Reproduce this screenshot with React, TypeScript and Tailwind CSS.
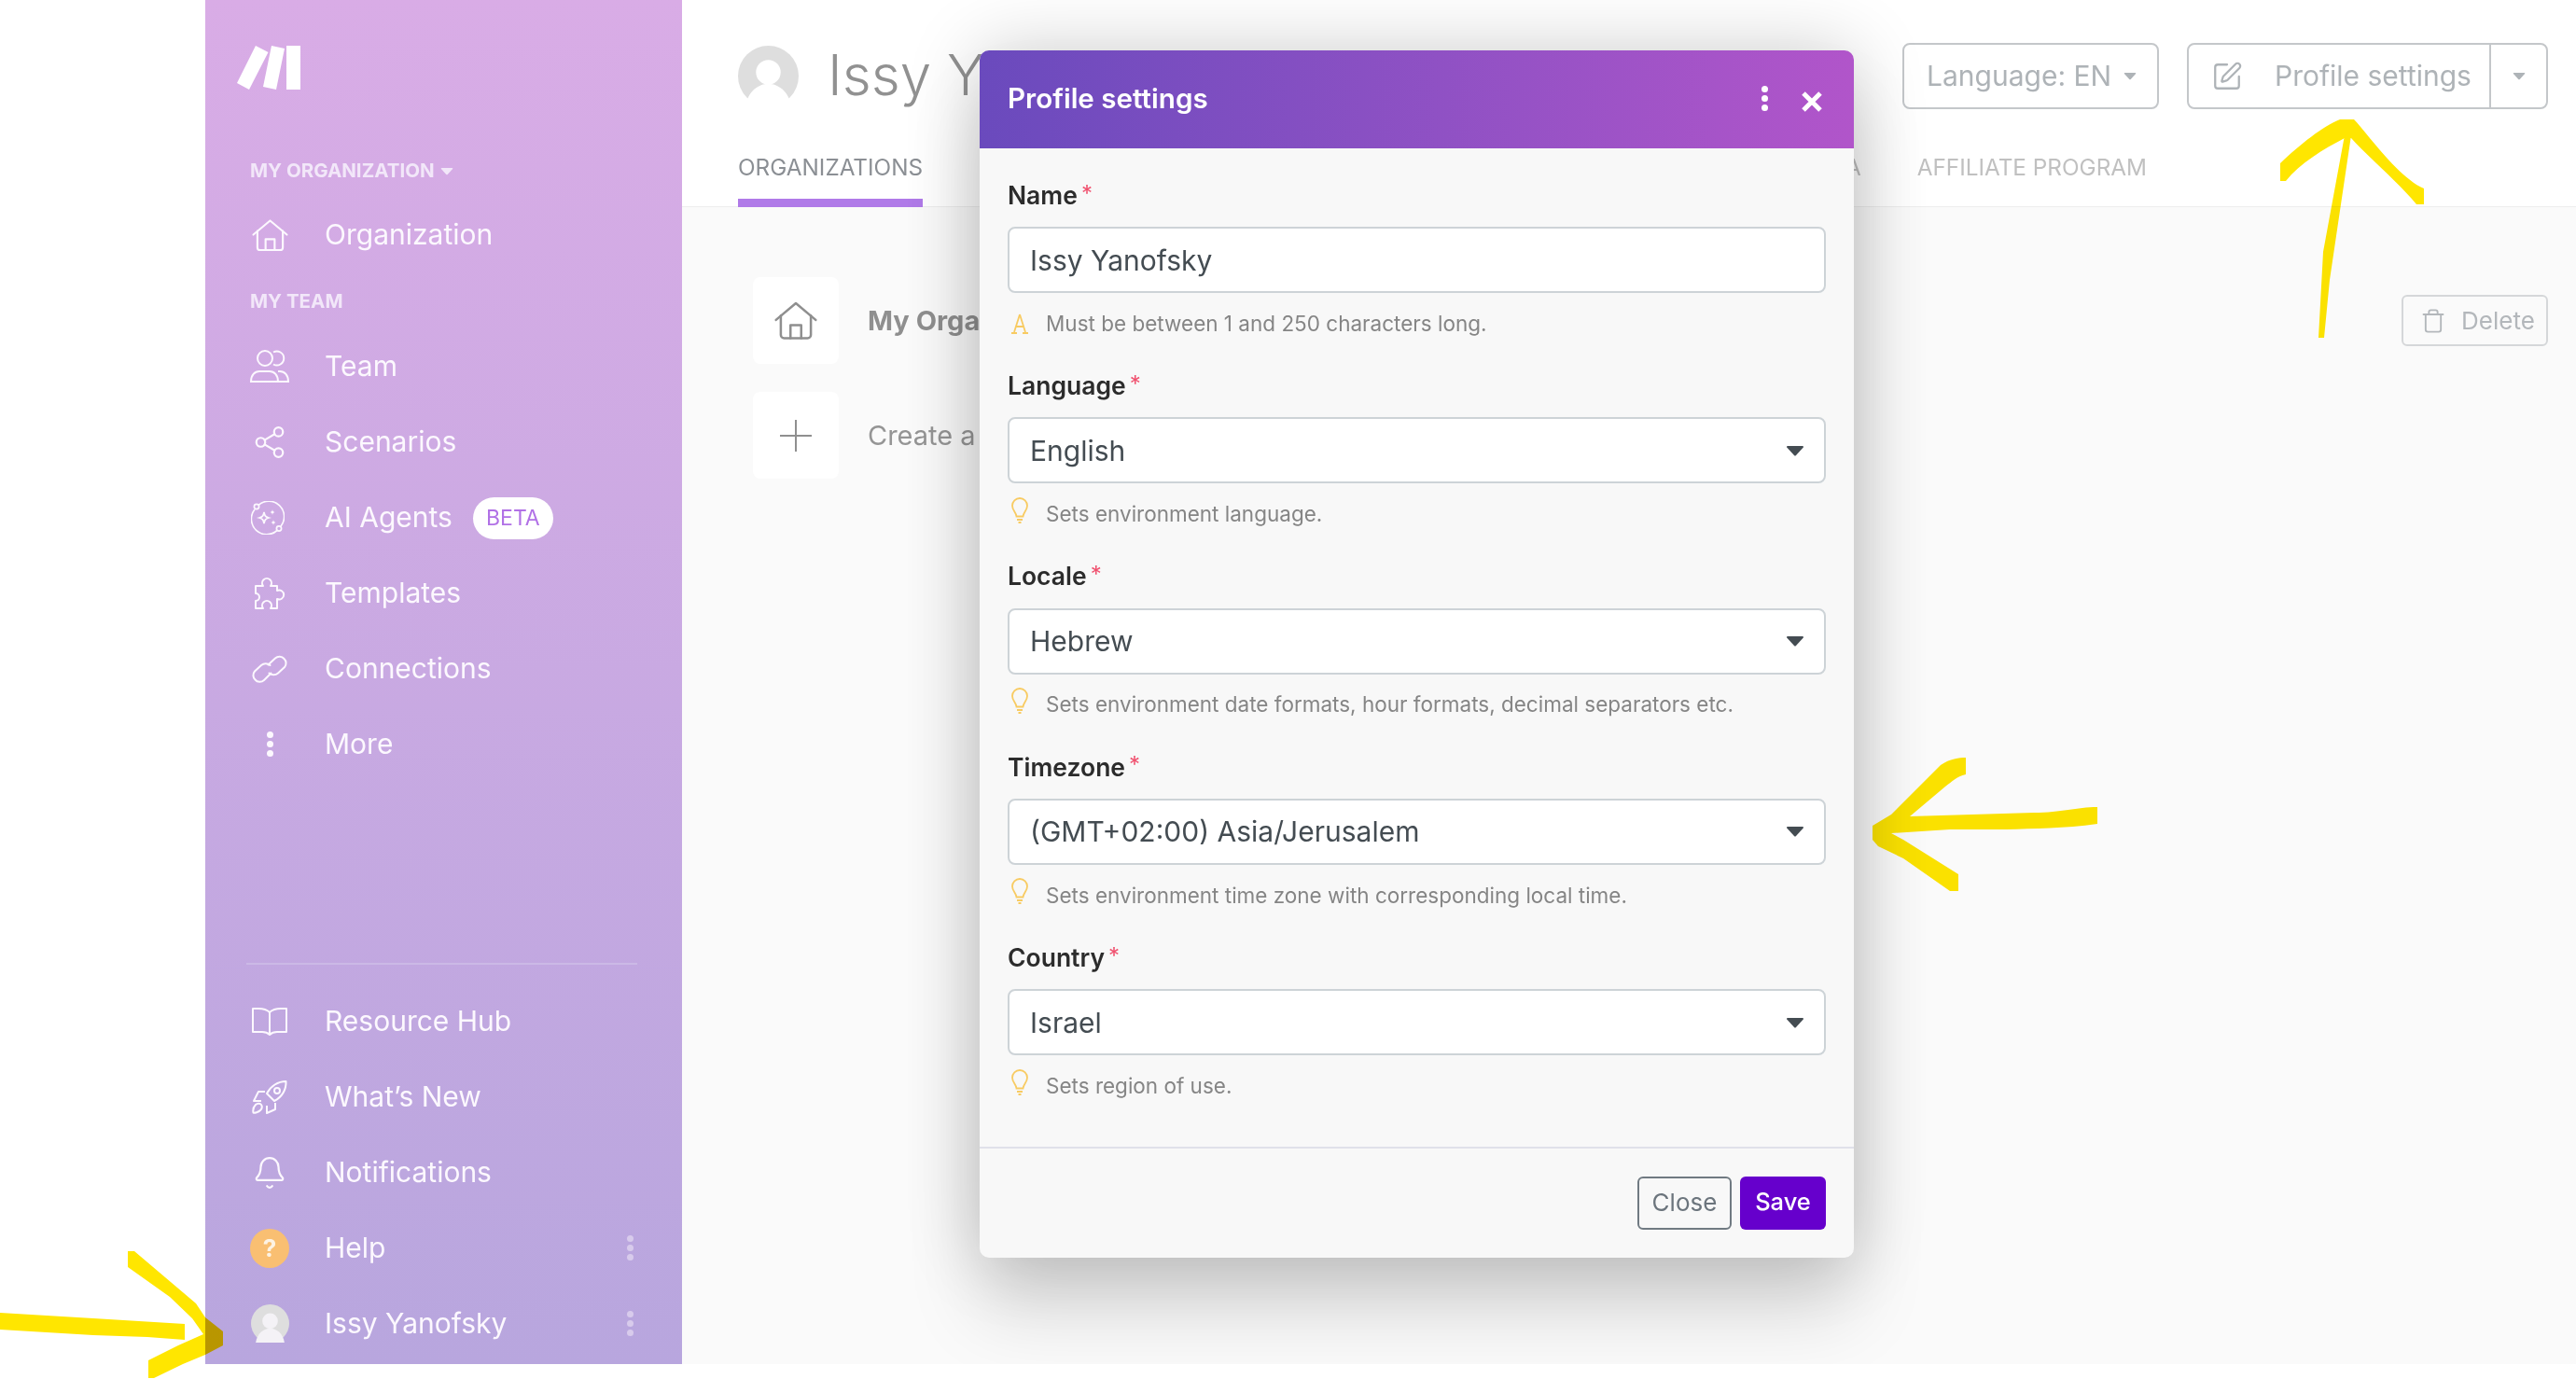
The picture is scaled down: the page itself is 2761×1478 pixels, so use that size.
import { ReactNode } from 'react'
import { Bell, Share2, SquarePen, Trash } from 'lucide-react'

const FIELDS = [
  { label: 'Name', value: 'Issy Yanofsky', hint: 'Must be between 1 and 250 characters long.', select: false },
  { label: 'Language', value: 'English', hint: 'Sets environment language.', select: true },
  { label: 'Locale', value: 'Hebrew', hint: 'Sets environment date formats, hour formats, decimal separators etc.', select: true },
  { label: 'Timezone', value: '(GMT+02:00) Asia/Jerusalem', hint: 'Sets environment time zone with corresponding local time.', select: true },
  { label: 'Country', value: 'Israel', hint: 'Sets region of use.', select: true },
]

const HouseIcon = ({ className }: { className: string }) => (
  <svg viewBox="0 0 40 36" fill="none" stroke="currentColor" strokeWidth="2.2" strokeLinecap="round" strokeLinejoin="round" className={className}>
    <path d="M1.5 17 20 1.5 38.5 17" />
    <path d="M6 13v18a3 3 0 0 0 3 3h22a3 3 0 0 0 3-3V13" />
    <path d="M15 34V22h10v12" />
  </svg>
)

const TeamIcon = () => (
  <svg viewBox="0 0 42 36" fill="none" stroke="currentColor" strokeWidth="2" className="h-[36px] w-[42px]">
    <circle cx="16" cy="9" r="8" />
    <path d="M25 2.5a7.5 7.5 0 1 1 0 13" />
    <path d="M1 34c0-7 4-11 9-11h11c5 0 9 4 9 11z" />
    <path d="M30 23h2c5 0 9 4 9 11H30" />
  </svg>
)

const AiIcon = () => (
  <svg viewBox="0 0 36 36" fill="none" stroke="currentColor" strokeWidth="1.7" className="h-[36px] w-[36px]">
    <path d="M8 4.500A16.500 16.500 0 0 1 32 27M28 31.500A16.500 16.500 0 0 1 4 9" />
    <circle cx="6" cy="6" r="2.600" />
    <circle cx="30" cy="29.500" r="2.600" />
    <path d="M14 12c.7 4 1.600 5 5 6-3.400 1-4.300 2-5 6-.7-4-1.600-5-5-6 3.400-1 4.300-2 5-6z" />
    <path d="M23 9c.3 2 .8 2.500 2.500 3-1.700.5-2.200 1-2.500 3-.3-2-.8-2.500-2.500-3 1.700-.5 2.200-1 2.500-3zM24 20c.3 2 .8 2.500 2.500 3-1.700.5-2.200 1-2.500 3-.3-2-.8-2.500-2.500-3 1.700-.5 2.200-1 2.500-3z" fill="currentColor" stroke="none" />
  </svg>
)

const PuzzleIcon = () => (
  <svg viewBox="0 0 37 36" fill="none" stroke="currentColor" strokeWidth="2" strokeLinejoin="round" className="h-[36px] w-[37px]">
    <path d="M3 10h8a5 5 0 1 1 8 0h7v5a5 5 0 1 1 0 9v10h-7a5 5 0 1 0-8 0H3v-8a4 4 0 1 0 0-8z" />
  </svg>
)

const LinkIcon = () => (
  <svg viewBox="0 0 42 30" fill="none" stroke="currentColor" strokeWidth="2" strokeLinecap="round" className="h-[30px] w-[42px]">
    <path d="M22.500 19.500 15 27a6.500 6.500 0 0 1-9.500-.5 6.500 6.500 0 0 1-.5-9l7-6.500a7 7 0 0 1 9.500 0" />
    <path d="M19.500 10.500 27 3.500a6.500 6.500 0 0 1 9.500.5 6.500 6.500 0 0 1 .5 9l-7 6.500a7 7 0 0 1-9.500 0" />
  </svg>
)

const BookIcon = () => (
  <svg viewBox="0 0 40 30" fill="none" stroke="currentColor" strokeWidth="2" strokeLinejoin="round" className="h-[30px] w-[40px]">
    <path d="M20 5c-3-3-7-4-12-4H2v25h10c4 0 6 1 8 3 2-2 4-3 8-3h10V1h-6c-5 0-9 1-12 4z" />
    <path d="M20 5v23" />
  </svg>
)

const RocketIcon = () => (
  <svg viewBox="0 0 38 36" fill="none" stroke="currentColor" strokeWidth="2" strokeLinejoin="round" className="h-[36px] w-[38px]">
    <path d="M36.500 1C28 1 20 6 16 14l8 8c8-4 13-12 12.500-21z" />
    <circle cx="27" cy="11" r="3" />
    <path d="M14 12H7L2 22h8" />
    <path d="M25 24v7l-9 4v-8" />
    <path d="M4 26c2-2 5-1.500 6 0s1 4-1 6-6 3-7.500 2.500C1 32 2 28 4 26z" />
  </svg>
)

const Kebab = ({ className }: { className: string }) => (
  <div className={`flex flex-col items-center gap-[3px] ${className}`}>
    <span className="h-[7px] w-[7px] rounded-full bg-current" />
    <span className="h-[7px] w-[7px] rounded-full bg-current" />
    <span className="h-[7px] w-[7px] rounded-full bg-current" />
  </div>
)

const Avatar = ({ className, cut }: { className: string; cut: string }) => (
  <svg viewBox="0 0 64 64" className={className}>
    <circle cx="32" cy="32" r="32" fill="#dedede" />
    <circle cx="32" cy="28" r="13" fill={cut} />
    <path d="M8 64c2-16 14-24 24-24s22 8 24 24z" fill={cut} />
  </svg>
)

const Caret = ({ className }: { className: string }) => (
  <svg viewBox="0 0 20 12" className={className}>
    <path d="M2 1h16a1 1 0 0 1 .8 1.600L11 11a1.400 1.400 0 0 1-2 0L1.200 2.600A1 1 0 0 1 2 1z" fill="currentColor" />
  </svg>
)

const WarnIcon = () => (
  <svg viewBox="0 0 20 22" fill="none" stroke="#f8cb62" strokeWidth="1.800" className="h-[22px] w-[20px]">
    <path d="M10 1 4 20M10 1l6 19M6 14h8M1 21h6M13 21h6" />
  </svg>
)

const BulbIcon = () => (
  <svg viewBox="0 0 20 28" fill="none" stroke="#f8cb62" strokeWidth="1.800" className="-mt-[9px] h-[28px] w-[20px]">
    <path d="M6.500 20.500C6 16 2 14 2 9a8 8 0 0 1 16 0c0 5-4 7-4.500 11.500z" />
    <path d="M7 24h6M8.500 27h3" />
  </svg>
)

function NavRow({ icon, label, kebab, badge }: { icon: ReactNode; label: string; kebab?: boolean; badge?: boolean }) {
  return (
    <div className="flex h-[81px] items-center">
      <div className="flex w-[42px] justify-center text-[#fcf8fe]">{icon}</div>
      <span className="ml-[38px] pb-[1px] text-[30px] leading-none text-[#fcf8fe]">{label}</span>
      {badge && <span className="ml-[22px] mt-[2px] flex h-[45px] w-[86px] items-center justify-center rounded-full bg-white text-[23px] text-[#b171e6]">BETA</span>}
      {kebab && <Kebab className="ml-auto mr-[4px] text-[#d8cbec]" />}
    </div>
  )
}

function Sidebar() {
  return (
    <aside className="flex h-full w-[511px] shrink-0 flex-col bg-linear-to-b from-[#d9ace6] to-[#b8a6de] px-[48px] pb-[3px] pt-[48px]">
      <svg viewBox="0 0 68 48" className="-ml-[14px] mb-[66px] h-[48px] w-[68px] shrink-0" fill="#ffffff">
        <path d="M20 1 33.500 8 13 48 0 41zM37 1 51 4 42 48 28 45zM53 1H68V48H53z" />
      </svg>
      <div className="mb-[10px] flex h-[40px] items-center gap-[6px] pt-[3px] text-[20.500px] font-bold text-[#f2e7f9]">
        MY ORGANIZATION
        <Caret className="h-[9px] w-[14px] text-[#f2e7f9]" />
      </div>
      <div className="mb-[10px] flex h-[80px] items-center">
        <div className="flex w-[42px] justify-center"><HouseIcon className="h-[35px] w-[39px] text-[#fcf8fe]" /></div>
        <span className="ml-[38px] pb-[3px] text-[30px] leading-none text-[#fcf8fe]">Organization</span>
      </div>
      <div className="mb-[10px] flex h-[40px] items-center pt-[3px] text-[20.500px] font-bold text-[#f2e7f9]">MY TEAM</div>
      <NavRow icon={<TeamIcon />} label="Team" />
      <NavRow icon={<Share2 className="h-[38px] w-[38px]" strokeWidth={1.4} />} label="Scenarios" />
      <NavRow icon={<span className="-ml-[5px]"><AiIcon /></span>} label="AI Agents" badge />
      <NavRow icon={<PuzzleIcon />} label="Templates" />
      <NavRow icon={<LinkIcon />} label="Connections" />
      <NavRow icon={<Kebab className="text-[#fcf8fe]" />} label="More" />
      <div className="flex-1" />
      <div className="-ml-[4px] mb-[20px] h-[2px] w-[419px] bg-[#cbb9e6]" />
      <NavRow icon={<BookIcon />} label="Resource Hub" />
      <NavRow icon={<RocketIcon />} label="What’s New" />
      <NavRow icon={<Bell className="h-[38px] w-[38px]" strokeWidth={1.4} />} label="Notifications" />
      <NavRow
        icon={<span className="flex h-[42px] w-[42px] items-center justify-center rounded-full bg-[#f9bf72] text-[26px] font-bold text-[#fdf3e4]">?</span>}
        label="Help"
        kebab
      />
      <NavRow icon={<Avatar className="h-[41px] w-[41px]" cut="#f4f2f6" />} label="Issy Yanofsky" kebab />
    </aside>
  )
}

function PageBehind() {
  return (
    <main className="flex h-full min-w-0 flex-1 flex-col bg-[#fafafa]">
      <header className="h-[222px] shrink-0 border-b border-[#eeeeee] bg-white pt-[46px]">
        <div className="flex h-[71px] items-center pl-[60px] pr-[30px]">
          <Avatar className="h-[65px] w-[65px]" cut="#ffffff" />
          <h1 className="ml-[31px] pb-[3px] text-[60px] font-light leading-none text-[#919191]">Issy Yanofsky</h1>
          <button className="ml-auto flex h-[71px] w-[275px] items-center rounded-[8px] border-2 border-[#c4c7ca] pl-[24px] text-[30px] text-[#aeb3b7]">
            Language: EN
            <Caret className="ml-[13px] h-[9px] w-[14px]" />
          </button>
          <div className="ml-[30px] flex h-[71px] w-[387px] items-center rounded-[8px] border-2 border-[#c4c7ca] text-[30px] text-[#aeb3b7]">
            <SquarePen className="ml-[24px] h-[34px] w-[34px]" strokeWidth={1.6} />
            <span className="ml-[34px]">Profile settings</span>
            <div className="ml-auto flex h-full w-[61px] items-center justify-center border-l-2 border-[#c4c7ca]">
              <Caret className="h-[9px] w-[14px]" />
            </div>
          </div>
        </div>
        <nav className="mt-[43px] flex h-[62px] items-start pl-[60px] pr-[460px] text-[24.300px] leading-none">
          <div className="flex h-[62px] flex-col justify-between pt-[7px]">
            <span className="text-[#8b8f94]">ORGANIZATIONS</span>
            <span className="h-[9px] w-full bg-[#b07ae8]" />
          </div>
          <span className="ml-auto pt-[7px] text-[#c0c0c0]">PASSWORD / 2FA</span>
          <span className="ml-[60px] pt-[7px] text-[#c0c0c0]">AFFILIATE PROGRAM</span>
        </nav>
      </header>
      <section className="flex flex-col gap-[30px] pl-[76px] pr-[30px] pt-[75px]">
        <div className="flex items-center">
          <div className="flex h-[93px] w-[92px] items-center justify-center rounded-[8px] bg-white">
            <HouseIcon className="h-[42px] w-[46px] text-[#8f8f8f]" />
          </div>
          <span className="ml-[31px] text-[29px] font-bold text-[#8f8f8f]">My Organization</span>
          <button className="ml-auto flex h-[55px] w-[157px] items-center rounded-[6px] border-2 border-[#d5d7d9] pl-[18px] text-[26px] text-[#b3b7bb]">
            <Trash className="h-[28px] w-[28px]" strokeWidth={1.6} />
            <span className="ml-[16px]">Delete</span>
          </button>
        </div>
        <div className="flex items-center">
          <div className="flex h-[93px] w-[92px] items-center justify-center rounded-[8px] bg-white">
            <svg viewBox="0 0 34 34" stroke="#8f8f8f" strokeWidth="2" className="h-[34px] w-[34px]"><path d="M17 0v34M0 17h34" /></svg>
          </div>
          <span className="ml-[31px] text-[29px] text-[#959595]">Create a new organization</span>
        </div>
      </section>
    </main>
  )
}

function ProfileModal() {
  return (
    <div className="absolute left-[1050px] top-[54px] flex h-[1294px] w-[937px] flex-col rounded-[10px] bg-[#f8f8f8] shadow-[0_0_80px_rgba(0,0,0,0.2),0_60px_80px_rgba(0,0,0,0.13)]">
      <div className="flex h-[105px] shrink-0 items-center rounded-t-[10px] bg-linear-to-r from-[#6a4abd] to-[#b155ca] px-[30px]">
        <h2 className="pb-[2px] text-[29.600px] font-semibold leading-none text-white">Profile settings</h2>
        <Kebab className="ml-auto -mt-[2px] text-white" />
        <svg viewBox="0 0 22 22" stroke="#ffffff" strokeWidth="5" className="ml-[36px] mr-[4px] mt-[4px] h-[22px] w-[22px]"><path d="M2 2l18 18M20 2 2 20" /></svg>
      </div>
      <div className="flex-1 px-[30px] pt-[34px]">
        {FIELDS.map((field, i) => (
          <div key={field.label} className="mb-[34.250px]">
            <label className="flex h-[32px] items-center text-[26.500px] font-semibold leading-none text-[#2c2c2c]">
              {field.label}
              <span className="-mt-[3px] ml-[4px] text-[24px] font-normal text-[#f0506e]">*</span>
            </label>
            <div className="mt-[18px] flex h-[71px] items-center rounded-[8px] border-2 border-[#cdd3d7] bg-white pl-[22px] pr-[21px] text-[30px] leading-none text-[#444c52]">
              {field.value}
              {field.select && <Caret className="ml-auto h-[12px] w-[20px] text-[#444c52]" />}
            </div>
            <div className="mt-[17px] flex h-[32px] items-center text-[22.500px] leading-none text-[#858585]">
              <div className="ml-[3px] flex w-[20px] justify-center">{i === 0 ? <WarnIcon /> : <BulbIcon />}</div>
              <span className="ml-[18px]">{field.hint}</span>
            </div>
          </div>
        ))}
      </div>
      <div className="flex shrink-0 justify-end gap-[9px] border-t-2 border-[#e0e1ea] px-[30px] pb-[30px] pt-[30px]">
        <button className="flex h-[57px] w-[101px] items-center justify-center rounded-[6px] border-2 border-[#707a82] pb-[2px] text-[26px] text-[#6c757d]">Close</button>
        <button className="flex h-[57px] w-[92px] items-center justify-center rounded-[6px] bg-[#6600cc] pb-[2px] text-[25.500px] font-medium text-white">Save</button>
      </div>
    </div>
  )
}

function Annotations() {
  return (
    <svg viewBox="0 0 2761 1478" fill="#ffe600" className="pointer-events-none absolute left-0 top-0 h-[1478px] w-[2761px] mix-blend-multiply">
      <path d="M0 1407 100 1413 198 1419V1436L158 1433 100 1431 0 1425z" />
      <path d="M137 1341h7L210 1397 220 1412 239 1427V1442L220 1452 196 1462 165 1477H159V1458L191 1442 218 1430 206 1413 182 1390 137 1358z" />
      <path d="M2513 145H2520L2497 300 2491 362H2485L2490 270z" />
      <path d="M2444 175C2465 155 2490 135 2508 128H2523C2535 140 2570 190 2598 202V219H2590C2570 195 2540 170 2520 148H2513C2490 160 2465 175 2450 194H2444z" />
      <path d="M2107 812V830C2097 832 2092 838 2085 843L2047 875 2180 871C2210 871 2225 865 2248 865V883C2212 888 2180 888 2150 889L2090 889 2027 893 2040 900 2099 937V955H2090L2040 920 2013 907 2007 900V885L2027 873 2080 820C2090 813 2100 812 2107 812z" />
    </svg>
  )
}

export default function App() {
  return (
    <div className="relative h-[1478px] w-[2761px] overflow-hidden bg-white font-[Inter,sans-serif]">
      <div className="relative flex h-[1462px] overflow-hidden pl-[220px]">
        <Sidebar />
        <PageBehind />
        <ProfileModal />
      </div>
      <Annotations />
    </div>
  )
}
